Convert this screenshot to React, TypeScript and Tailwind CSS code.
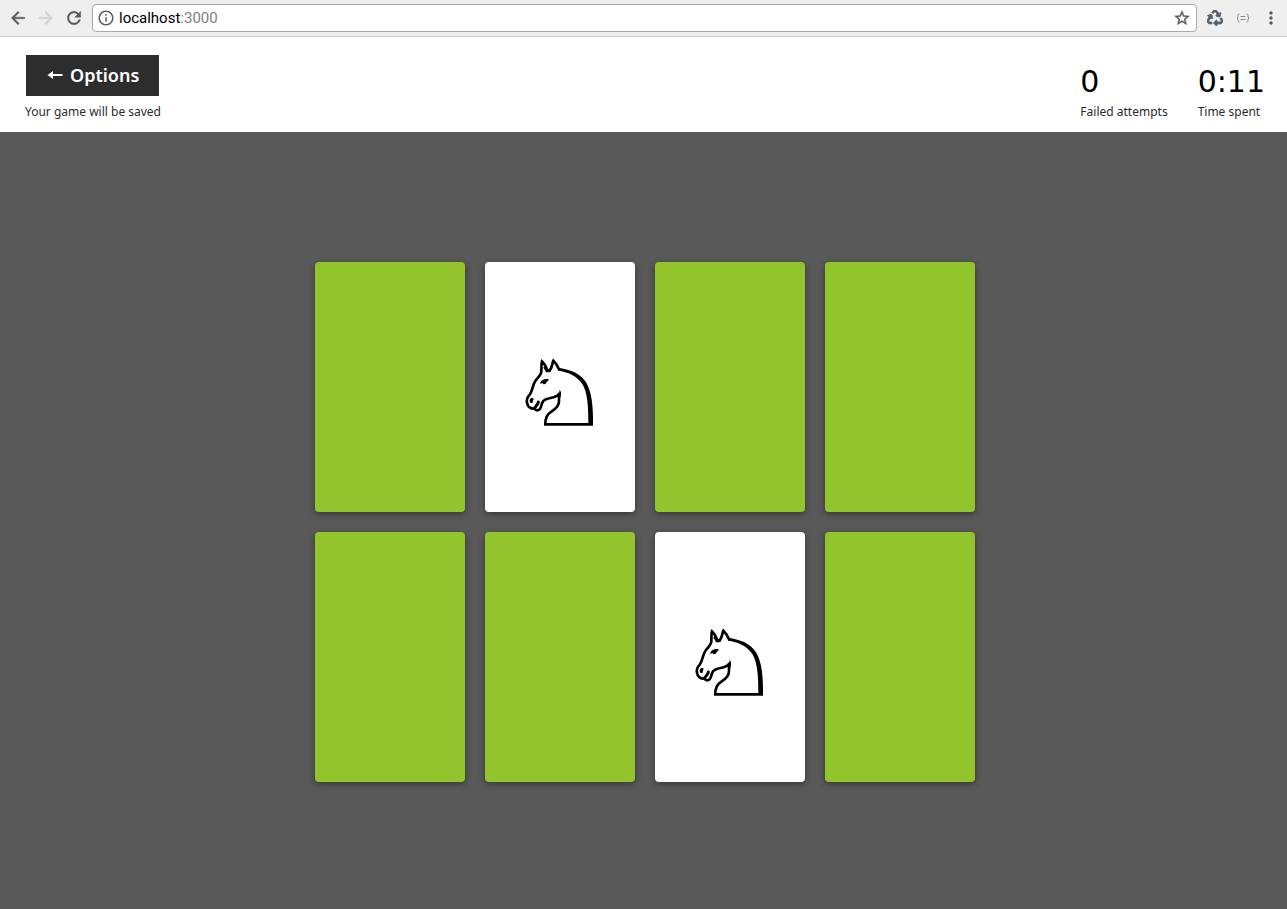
import React from "react";
import {
  MdArrowBack,
  MdArrowForward,
  MdInfoOutline,
  MdMoreVert,
  MdRefresh,
  MdStarBorder,
} from "react-icons/md";
import { FaRecycle } from "react-icons/fa";

const cards = [
  { id: 1, open: false },
  { id: 2, open: true },
  { id: 3, open: false },
  { id: 4, open: false },
  { id: 5, open: false },
  { id: 6, open: false },
  { id: 7, open: true },
  { id: 8, open: false },
];

function Knight() {
  return (
    <svg viewBox="0 0 270 270" className="size-[90px]" fill="none" stroke="#000" strokeLinejoin="miter" aria-hidden="true">
      <path
        d="M91 238 C90 218 97 207 110 199 C125 190 133 182 132 167 C131 160 132 154 134 144 C131 151 125 154 116 157 C105 160 91 160 84 169 C78 177 80 187 74 193 C68 198 61 195 57 191 C46 191 38 184 36 173 C34 164 39 154 45 148 C53 136 53 119 61 108 C67 99 78 91 79 80 C80 68 78 57 81 49 C86 54 94 64 96 76 L105 75 C113 65 111 54 115 47 C122 54 128 62 132 73"
        strokeWidth="8"
      />
      <path d="M134 134 L138 142 L136 160 L129 164 Z" fill="#000" stroke="none" />
      <path d="M87 66 L96 79 L104 78 L110 63" strokeWidth="6" />
      <path
        d="M129 68 C165 74 194 82 213 112 C231 143 235 186 234 242 L87 242 L87 234 L220 234 C220 185 218 144 202 117 C186 92 158 81 129 77 Z"
        fill="#000"
        stroke="none"
      />
      <path d="M76 114 C78 104 89 101 101 102 L99 109 L95 110 C95 116 89 119 84 117 L82 113 L77 118 Z" fill="#000" stroke="none" />
      <path d="M44 168 C44 161 49 157 55 160 C57 164 53 166 53 173 C48 175 44 173 44 168 Z" fill="#000" stroke="none" />
      <path d="M70 171 C69 179 64 180 60 188" strokeWidth="9" strokeLinecap="round" />
    </svg>
  );
}

function BrowserBar() {
  return (
    <div className="flex h-[37px] items-center border-b border-[#cfcfcf] bg-[#efefef] pr-1.5 pl-2 text-[#5a5a5a]">
      <div className="flex items-center gap-2">
        <button type="button" aria-label="Back">
          <MdArrowBack className="size-5 [&>path:last-child]:stroke-[0.5]" />
        </button>
        <button type="button" aria-label="Forward" disabled className="text-[#d0d0d0]">
          <MdArrowForward className="size-5 [&>path:last-child]:stroke-[0.5]" />
        </button>
        <button type="button" aria-label="Reload">
          <MdRefresh className="size-5 [&>path:last-child]:stroke-[0.5]" />
        </button>
      </div>
      <div className="ml-2 flex h-7 flex-1 items-center rounded border border-[#a9a9a9] bg-white px-1">
        <MdInfoOutline className="size-[18px]" />
        <div className="ml-1 flex-1 font-['Roboto',sans-serif] text-[15px] leading-5 text-black">
          localhost<span className="text-[#808080]">:3000</span>
        </div>
        <button type="button" aria-label="Bookmark this page" className="mr-px">
          <MdStarBorder className="size-[18px] [&>path:last-child]:stroke-[0.5]" />
        </button>
      </div>
      <div className="ml-2 flex items-center">
        <button type="button" aria-label="Recycle extension" className="flex w-5 justify-center text-[#56606a]">
          <FaRecycle className="size-4 stroke-[24]" />
        </button>
        <button type="button" aria-label="JSON extension" className="ml-2 flex w-5 justify-center text-[#8a8a8a]">
          <svg viewBox="0 0 14 10" className="h-[10px] w-[14px]" fill="none" stroke="currentColor" aria-hidden="true">
            <path d="M3.500 1Q2 1 2 2.500V4L1 5l1 1v1.500Q2 9 3.500 9M10.500 1Q12 1 12 2.500V4l1 1-1 1v1.500Q12 9 10.500 9M4.500 3.500h5M4.500 6.500h5" />
          </svg>
        </button>
        <button type="button" aria-label="Menu" className="ml-2 flex w-5 justify-center">
          <MdMoreVert className="size-5" />
        </button>
      </div>
    </div>
  );
}

function Stat({ value, label }: { value: string; label: string }) {
  return (
    <div className="flex flex-col">
      <span className="font-['DejaVu_Sans',sans-serif] text-[30px] leading-9 text-black">{value}</span>
      <span className="text-xs leading-6">{label}</span>
    </div>
  );
}

export default function App() {
  return (
    <div className="flex min-h-screen flex-col bg-[#595959] font-['Noto_Sans',sans-serif] text-[#2b2b2b]">
      <BrowserBar />
      <header className="flex items-end justify-between bg-white pt-[18px] pr-[22px] pb-2 pl-[25px]">
        <div className="flex flex-col items-start">
          <button
            type="button"
            className="ml-px flex h-[41px] items-center gap-1.5 bg-[#2d2d2d] px-5 pb-0.5 text-lg font-semibold text-white"
          >
            <svg viewBox="0 0 18 12" className="h-3 w-[18px]" aria-hidden="true">
              <path d="M1.500 6 7 2v3.100h9.500v1.900H7V10Z" fill="currentColor" />
            </svg>
            Options
          </button>
          <p className="mt-1 text-xs leading-6">Your game will be saved</p>
        </div>
        <div className="flex gap-[30px]">
          <Stat value="0" label="Failed attempts" />
          <Stat value="0:11" label="Time spent" />
        </div>
      </header>
      <main className="flex flex-1 items-center justify-center pt-[3px] pl-[3px]">
        <div className="grid grid-cols-4 gap-5">
          {cards.map((card) => (
            <button
              key={card.id}
              type="button"
              aria-label={card.open ? "Knight" : "Hidden card"}
              className={
                card.open
                  ? "flex h-[250px] w-[150px] items-center justify-center rounded bg-white pt-[6px] shadow-[0_2px_6px_rgba(0,0,0,0.4)]"
                  : "h-[250px] w-[150px] rounded bg-[#92c52c] shadow-[0_2px_6px_rgba(0,0,0,0.4)]"
              }
            >
              {card.open && <Knight />}
            </button>
          ))}
        </div>
      </main>
    </div>
  );
}
